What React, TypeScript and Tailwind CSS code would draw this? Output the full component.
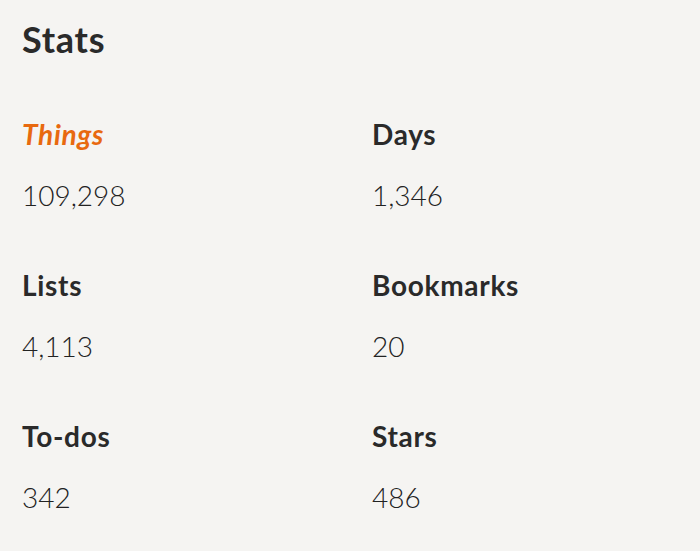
import React from "react";

const stats = [
  { label: "Things", value: "109,298", accent: true },
  { label: "Days", value: "1,346" },
  { label: "Lists", value: "4,113" },
  { label: "Bookmarks", value: "20" },
  { label: "To-dos", value: "342" },
  { label: "Stars", value: "486" },
];

export default function App() {
  return (
    <main
      className="min-h-[551px] w-[700px] bg-[#f5f4f2] pl-[22px] pt-[21px] text-[#2a2a2a]"
      style={{ fontFamily: "Lato, 'Open Sans', sans-serif" }}
    >
      <h1 className="text-[36px] font-bold leading-[36px] tracking-[0.02em]">Stats</h1>

      <div className="mt-[63px] grid grid-cols-[350px_1fr] gap-y-[62px]">
        {stats.map((s) => (
          <div key={s.label} className="flex flex-col gap-[33px]">
            <h2
              className={
                s.accent
                  ? "text-[28px] font-bold italic leading-[28px] tracking-[0.025em] text-[#e8690f]"
                  : "text-[28px] font-bold leading-[28px] tracking-[0.025em]"
              }
            >
              {s.label}
            </h2>
            <p className="text-[28px] font-light leading-[28px] text-[#222]">{s.value}</p>
          </div>
        ))}
      </div>
    </main>
  );
}
